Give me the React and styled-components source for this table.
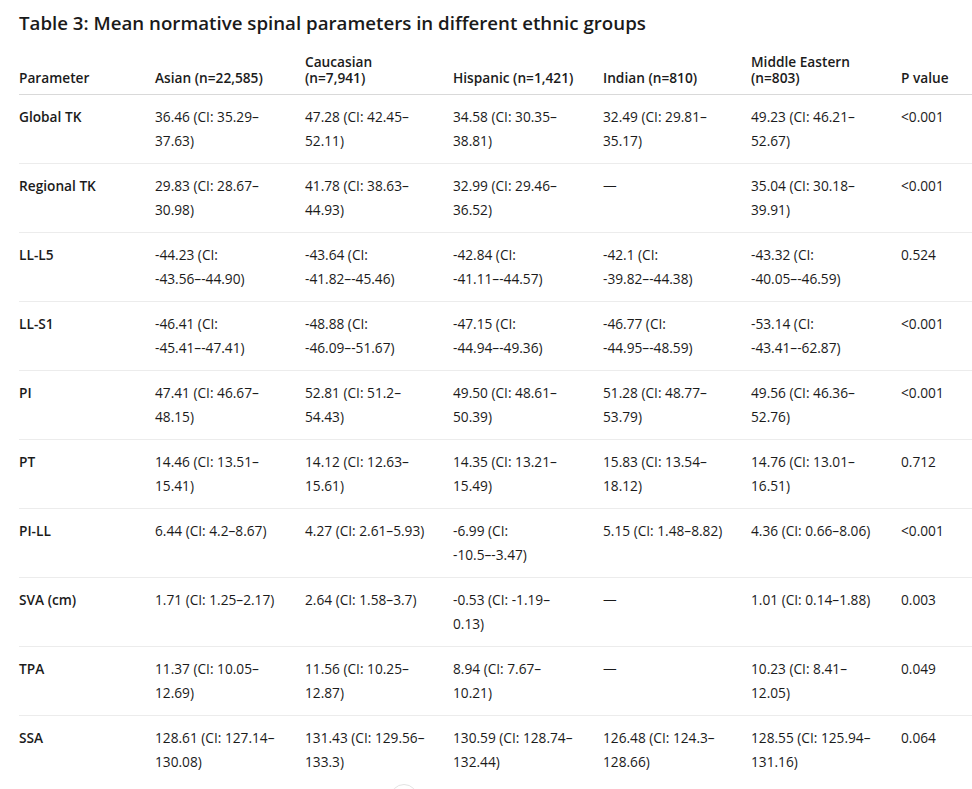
import styled, { createGlobalStyle } from 'styled-components'

const GlobalStyle = createGlobalStyle`
    body {
        margin: 0;
        background: #FFFFFF;
        font-family: "Open Sans", "Noto Sans", sans-serif;
        color: #1b1b1b;
        overflow: hidden;
    }
`

const COLUMNS = [
    { label: 'Parameter', width: 136 },
    { label: 'Asian (n=22,585)', width: 150 },
    { label: 'Caucasian (n=7,941)', width: 148 },
    { label: 'Hispanic (n=1,421)', width: 150 },
    { label: 'Indian (n=810)', width: 148 },
    { label: 'Middle Eastern (n=803)', width: 150 },
    { label: 'P value' },
]

const ROWS = [
    ['Global TK', '36.46 (CI: 35.29–37.63)', '47.28 (CI: 42.45–52.11)', '34.58 (CI: 30.35–38.81)', '32.49 (CI: 29.81–35.17)', '49.23 (CI: 46.21–52.67)', '<0.001'],
    ['Regional TK', '29.83 (CI: 28.67–30.98)', '41.78 (CI: 38.63–44.93)', '32.99 (CI: 29.46–36.52)', '—', '35.04 (CI: 30.18–39.91)', '<0.001'],
    ['LL-L5', '-44.23 (CI: -43.56–-44.90)', '-43.64 (CI: -41.82–-45.46)', '-42.84 (CI: -41.11–-44.57)', '-42.1 (CI: -39.82–-44.38)', '-43.32 (CI: -40.05–-46.59)', '0.524'],
    ['LL-S1', '-46.41 (CI: -45.41–-47.41)', '-48.88 (CI: -46.09–-51.67)', '-47.15 (CI: -44.94–-49.36)', '-46.77 (CI: -44.95–-48.59)', '-53.14 (CI: -43.41–-62.87)', '<0.001'],
    ['PI', '47.41 (CI: 46.67–48.15)', '52.81 (CI: 51.2–54.43)', '49.50 (CI: 48.61–50.39)', '51.28 (CI: 48.77–53.79)', '49.56 (CI: 46.36–52.76)', '<0.001'],
    ['PT', '14.46 (CI: 13.51–15.41)', '14.12 (CI: 12.63–15.61)', '14.35 (CI: 13.21–15.49)', '15.83 (CI: 13.54–18.12)', '14.76 (CI: 13.01–16.51)', '0.712'],
    ['PI-LL', '6.44 (CI: 4.2–8.67)', '4.27 (CI: 2.61–5.93)', '-6.99 (CI: -10.5–-3.47)', '5.15 (CI: 1.48–8.82)', '4.36 (CI: 0.66–8.06)', '<0.001'],
    ['SVA (cm)', '1.71 (CI: 1.25–2.17)', '2.64 (CI: 1.58–3.7)', '-0.53 (CI: -1.19–0.13)', '—', '1.01 (CI: 0.14–1.88)', '0.003'],
    ['TPA', '11.37 (CI: 10.05–12.69)', '11.56 (CI: 10.25–12.87)', '8.94 (CI: 7.67–10.21)', '—', '10.23 (CI: 8.41–12.05)', '0.049'],
    ['SSA', '128.61 (CI: 127.14–130.08)', '131.43 (CI: 129.56–133.3)', '130.59 (CI: 128.74–132.44)', '126.48 (CI: 124.3–128.66)', '128.55 (CI: 125.94–131.16)', '0.064'],
]

export default function App() {
    return (
        <Page>
            <GlobalStyle />
            <Title>Table 3: Mean normative spinal parameters in different ethnic groups</Title>
            <Table>
                <colgroup>
                    { COLUMNS.map((col) => <Col key={col.label} $width={col.width} />) }
                </colgroup>
                <thead>
                    <tr>
                        { COLUMNS.map((col) => <HeadCell key={col.label}>{col.label}</HeadCell>) }
                    </tr>
                </thead>
                <tbody>
                    {
                        ROWS.map((row) =>
                            <Row key={row[0]}>
                                { row.map((value, i) => <Cell key={i} $first={i === 0}>{value}</Cell>) }
                            </Row>)
                    }
                </tbody>
            </Table>
            <ScrollButton />
        </Page>
    )
}

const Page = styled.div`
    position: relative;
    width: 972px;
    height: 789px;
    padding: 10px 0 0 19px;
    box-sizing: border-box;
    overflow: hidden;
`

const Title = styled.h3`
    margin: 0 0 10px 0;
    font-size: 18.7px;
    line-height: 26px;
    font-weight: 600;
    color: #1a1a1a;
    white-space: nowrap;
`

const Table = styled.table`
    width: 953px;
    table-layout: fixed;
    border-collapse: collapse;
    font-size: 13.7px;
`

const Col = styled.col`
    width: ${(props) => props.$width ? `${props.$width}px` : 'auto'};
`

const HeadCell = styled.th`
    padding: 8px 28px 8px 0;
    text-align: left;
    vertical-align: bottom;
    font-weight: 600;
    line-height: 16px;
    border-bottom: 1px solid #d9d9d9;

    &:last-child {
        padding-right: 0;
    }
`

const Row = styled.tr`
    border-bottom: 1px solid #ececec;

    &:last-child {
        border-bottom: none;
    }
`

const Cell = styled.td`
    padding: 10px 28px 10px 0;
    vertical-align: top;
    line-height: 24px;
    font-weight: ${(props) => props.$first ? 600 : 400};

    &:last-child {
        padding-right: 0;
    }
`

const ScrollButton = styled.div`
    position: absolute;
    left: 390px;
    top: 784px;
    width: 26px;
    height: 26px;
    border-radius: 50%;
    border: 1px solid #e3e3e3;
    background: #FFFFFF;
`
